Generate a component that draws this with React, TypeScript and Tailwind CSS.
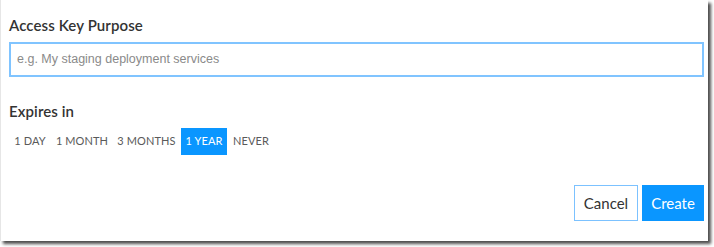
import React from "react";

const periods = [
  { label: "1 DAY", w: "w-[42px]" },
  { label: "1 MONTH", w: "w-[60px]" },
  { label: "3 MONTHS", w: "w-[67px]" },
  { label: "1 YEAR", w: "w-[46px]", active: true },
  { label: "NEVER", w: "w-[46px]" },
];

export default function App() {
  return (
    <div className="w-[714px] h-[247px] bg-white overflow-hidden">
      <div className="w-[708px] h-[241px] bg-white border-l border-[#e6e6e6] shadow-[3px_3px_3px_rgba(0,0,0,0.7)] flex flex-col pl-[8px] pr-[4px] font-['Lato',sans-serif]">
        <div className="mt-[15px] h-[20px] leading-[20px] text-[15px] font-semibold text-[#333] tracking-[0.1px]">
          Access Key Purpose
        </div>
        <div className="mt-[7px] h-[35px] border-2 border-[#80c4ff] flex items-center px-[6px]">
          <span className="font-['Liberation_Sans',Arial,sans-serif] text-[12.5px] text-[#8a8a8a]">
            e.g. My staging deployment services
          </span>
        </div>
        <div className="mt-[24px] h-[20px] leading-[20px] text-[15px] font-semibold text-[#333] tracking-[0.1px]">
          Expires in
        </div>
        <div className="mt-[7px] flex gap-[1px]">
          {periods.map((p) => (
            <div
              key={p.label}
              className={`${p.w} h-[27px] flex items-center justify-center text-[11px] tracking-[0.1px] ${
                p.active ? "bg-[#0a96ff] text-white" : "text-[#5a5a5a]"
              }`}
            >
              {p.label}
            </div>
          ))}
        </div>
        <div className="mt-[30px] flex justify-end gap-[4px]">
          <button className="w-[64px] h-[36px] border border-[#7cc2ff] bg-white text-[15px] text-[#333] flex items-center justify-center">
            Cancel
          </button>
          <button className="w-[62px] h-[36px] bg-[#0a96ff] text-[15px] text-white flex items-center justify-center">
            Create
          </button>
        </div>
      </div>
    </div>
  );
}
